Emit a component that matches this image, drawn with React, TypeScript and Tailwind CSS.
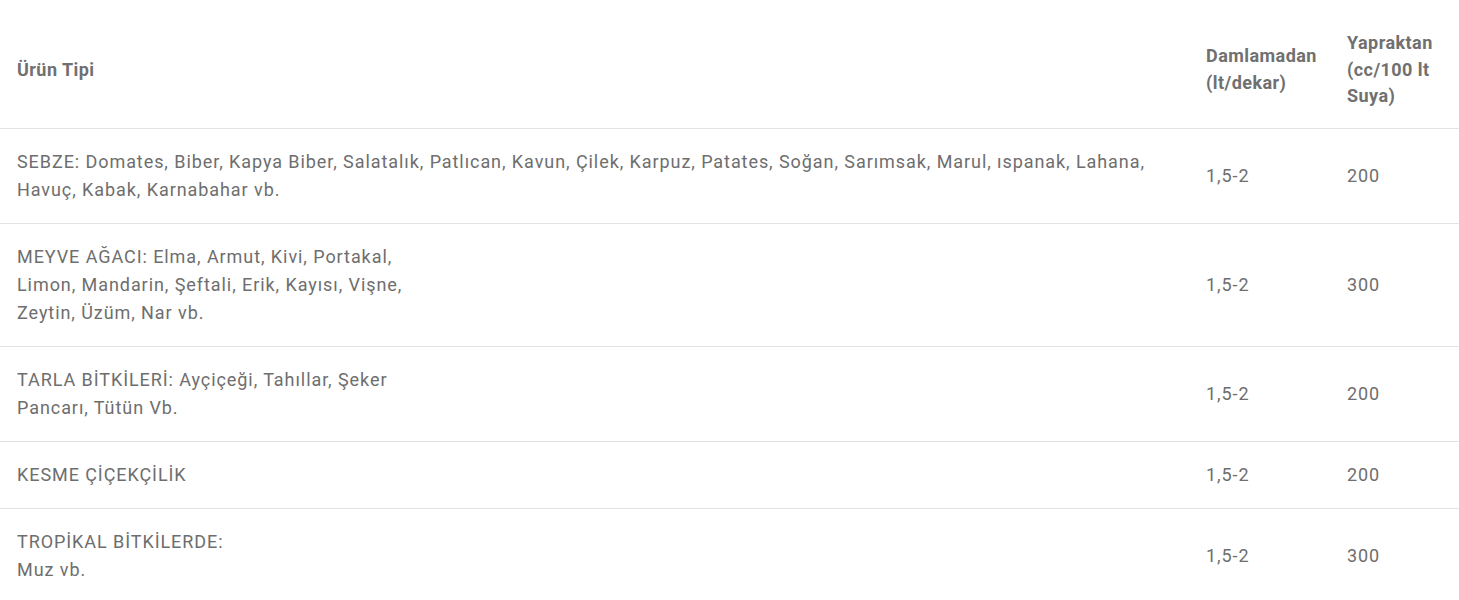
import React from "react";

const rows: { lines: string[]; d: string; y: string }[] = [
  {
    lines: [
      "SEBZE: Domates, Biber, Kapya Biber, Salatalık, Patlıcan, Kavun, Çilek, Karpuz, Patates, Soğan, Sarımsak, Marul, ıspanak, Lahana,",
      "Havuç, Kabak, Karnabahar vb.",
    ],
    d: "1,5-2",
    y: "200",
  },
  {
    lines: [
      "MEYVE AĞACI: Elma, Armut, Kivi, Portakal,",
      "Limon, Mandarin, Şeftali, Erik, Kayısı, Vişne,",
      "Zeytin, Üzüm, Nar vb.",
    ],
    d: "1,5-2",
    y: "300",
  },
  {
    lines: ["TARLA BİTKİLERİ: Ayçiçeği, Tahıllar, Şeker", "Pancarı, Tütün Vb."],
    d: "1,5-2",
    y: "200",
  },
  { lines: ["KESME ÇİÇEKÇİLİK"], d: "1,5-2", y: "200" },
  { lines: ["TROPİKAL BİTKİLERDE:", "Muz vb."], d: "1,5-2", y: "300" },
];

export default function App() {
  return (
    <div
      className="w-[1459px] bg-white text-[#6e6e6e]"
      style={{ fontFamily: "Roboto, 'Liberation Sans', sans-serif" }}
    >
      <div className="grid grid-cols-[1fr_141px_128px] items-center border-b border-[#e3e3e3] pt-[30px] pb-[18px] text-[18px] font-bold leading-[26.5px] tracking-[0.45px] text-[#707070]">
        <div className="pl-[17px]">Ürün Tipi</div>
        <div className="pl-[16px] pr-[8px]">Damlamadan (lt/dekar)</div>
        <div className="pl-[16px] pr-[10px]">Yapraktan (cc/100 lt Suya)</div>
      </div>
      {rows.map((r, i) => (
        <div
          key={i}
          className="grid grid-cols-[1fr_141px_128px] items-center border-b border-[#e3e3e3] py-[19px] text-[18px] leading-[28px] tracking-[0.93px]"
        >
          <div className="pl-[17px]">
            {r.lines.map((l, j) => (
              <div key={j}>{l}</div>
            ))}
          </div>
          <div className="pl-[16px]">{r.d}</div>
          <div className="pl-[16px]">{r.y}</div>
        </div>
      ))}
    </div>
  );
}
